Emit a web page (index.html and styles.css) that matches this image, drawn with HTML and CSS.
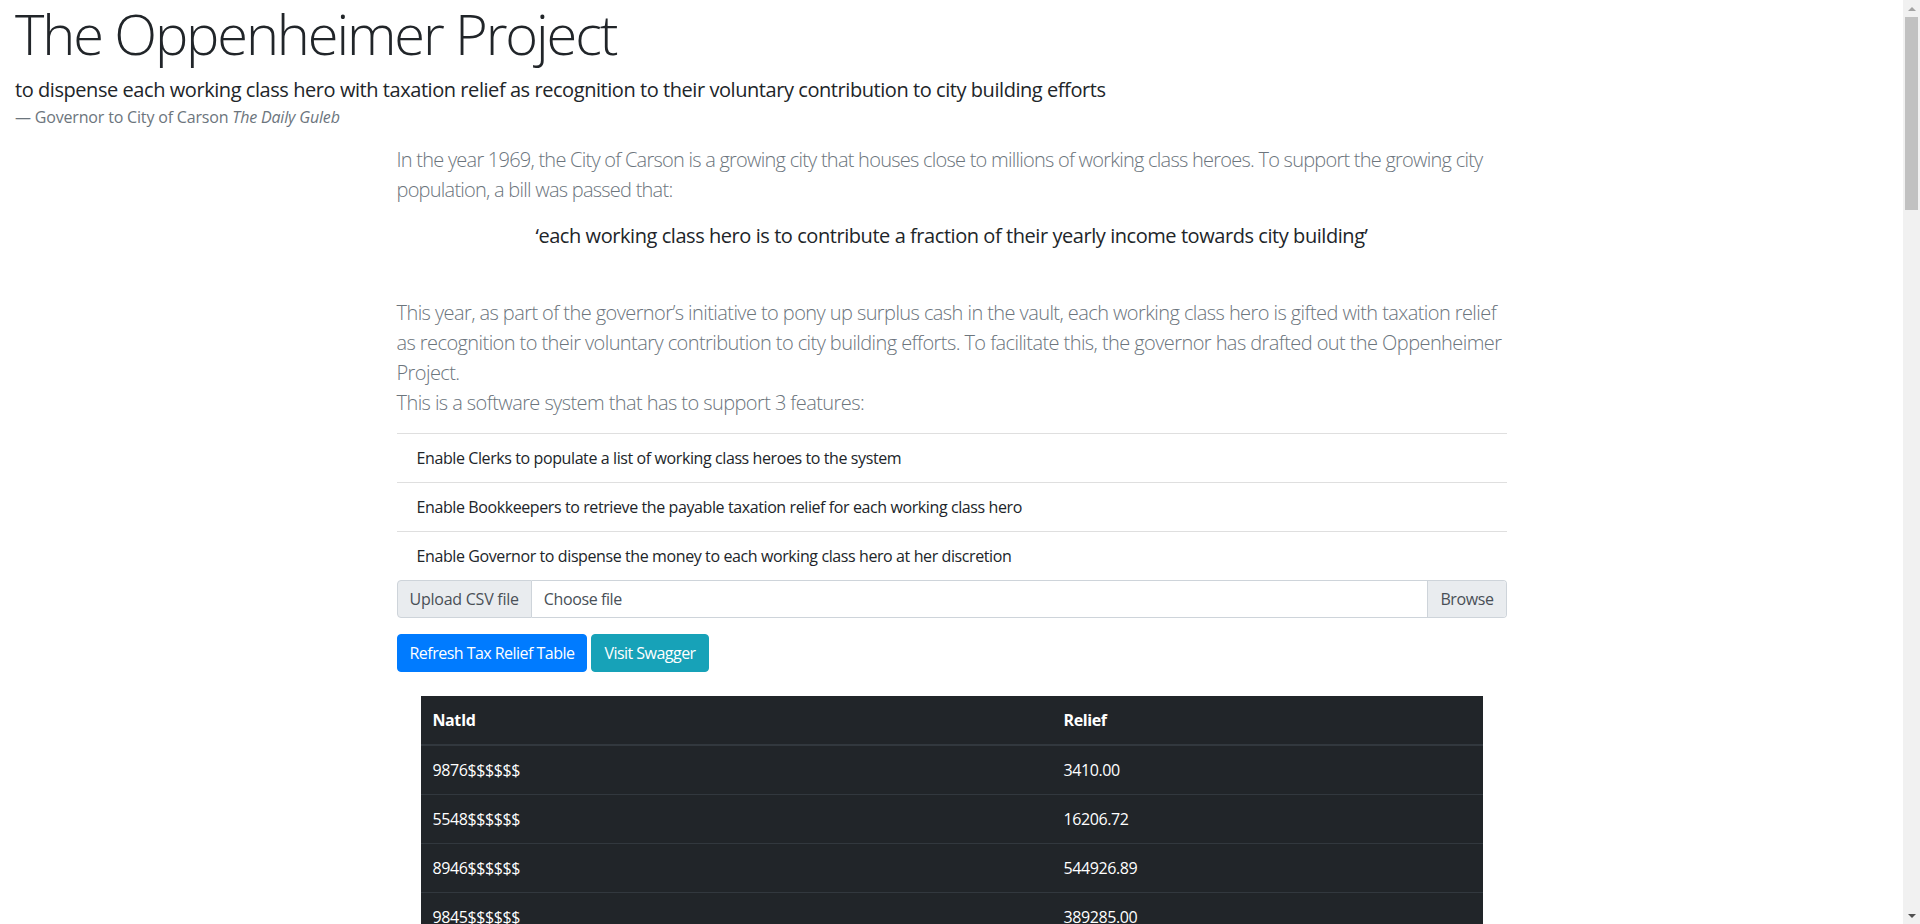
FILE: index.html
```html
<!DOCTYPE html>
<html lang="en">
<head>
<meta charset="utf-8">
<title>The Oppenheimer Project</title>
<link rel="stylesheet" href="styles.css">
</head>
<body>
<div class="viewport">
  <div class="page">
    <header class="intro">
      <h1 class="intro-title">The Oppenheimer Project</h1>
      <blockquote class="motto">
        <p class="motto-text">to dispense each working class hero with taxation relief as recognition to their voluntary contribution to city building efforts</p>
        <footer class="motto-source">— Governor to City of Carson <cite class="motto-cite">The Daily Guleb</cite></footer>
      </blockquote>
    </header>
    <main class="container">
      <p class="lead">In the year 1969, the City of Carson is a growing city that houses close to millions of working class heroes. To support the growing city population, a bill was passed that:</p>
      <p class="bill">‘each working class hero is to contribute a fraction of their yearly income towards city building’</p>
      <p class="lead lead-features">This year, as part of the governor’s initiative to pony up surplus cash in the vault, each working class hero is gifted with taxation relief as recognition to their voluntary contribution to city building efforts. To facilitate this, the governor has drafted out the Oppenheimer Project.<br>This is a software system that has to support 3 features:</p>
      <ul class="features">
        <li class="feature">Enable Clerks to populate a list of working class heroes to the system</li>
        <li class="feature">Enable Bookkeepers to retrieve the payable taxation relief for each working class hero</li>
        <li class="feature">Enable Governor to dispense the money to each working class hero at her discretion</li>
      </ul>
      <div class="upload">
        <span class="upload-prepend">Upload CSV file</span>
        <label class="upload-file">
          <input type="file" class="upload-input" accept=".csv">
          <span class="upload-label">Choose file</span>
          <span class="upload-browse">Browse</span>
        </label>
      </div>
      <div class="actions">
        <button class="btn btn-primary" type="button">Refresh Tax Relief Table</button>
        <button class="btn btn-info" type="button">Visit Swagger</button>
      </div>
      <table class="relief-table">
        <thead>
          <tr><th class="col-id">NatId</th><th>Relief</th></tr>
        </thead>
        <tbody>
          <tr><td>9876$$$$$$</td><td>3410.00</td></tr>
          <tr><td>5548$$$$$$</td><td>16206.72</td></tr>
          <tr><td>8946$$$$$$</td><td>544926.89</td></tr>
          <tr><td>9845$$$$$$</td><td>389285.00</td></tr>
        </tbody>
      </table>
    </main>
  </div>
  <div class="scrollbar" aria-hidden="true">
    <div class="scrollbar-btn"><span class="arrow-up"></span></div>
    <div class="scrollbar-track"><div class="scrollbar-thumb"></div></div>
    <div class="scrollbar-btn"><span class="arrow-down"></span></div>
  </div>
</div>
</body>
</html>
```

FILE: styles.css
```css
* { box-sizing: border-box; }
html, body { height: 100%; }
body {
  margin: 0;
  font-family: "Open Sans", "Segoe UI", sans-serif;
  font-size: 16px;
  line-height: 1.5;
  color: #212529;
  background: #fff;
  overflow: hidden;
  letter-spacing: -0.025em;
}
.viewport { display: flex; height: 100%; }
.page { flex: 1; min-width: 0; overflow: hidden; }

.intro { padding: 0 15px; }
.intro-title {
  margin: 0 0 8px;
  font-size: 56px;
  font-weight: 300;
  line-height: 1.2;
  letter-spacing: -0.038em;
}
.motto { margin: 0 0 16px; font-size: 20px; }
.motto-text { margin: 0; line-height: 30px; letter-spacing: -0.022em; }
.motto-source { display: block; font-size: 16px; line-height: 24px; color: #6c757d; letter-spacing: -0.011em; }
.motto-cite { font-style: italic; }

.container { max-width: 1140px; margin: 0 auto; padding: 0 15px; }
.lead {
  margin: 0 0 16px;
  font-size: 20px;
  font-weight: 300;
  line-height: 30px;
  color: #6c757d;
  letter-spacing: -0.038em;
}
.lead-features { margin-bottom: 15px; letter-spacing: -0.029em; }
.bill {
  margin: 0 0 47px;
  font-size: 20px;
  line-height: 30px;
  text-align: center;
  letter-spacing: -0.022em;
}

.features { list-style: none; margin: 0; padding: 0; }
.feature { padding: 12px 20px; border-top: 1px solid rgba(0,0,0,.125); }

.upload { display: flex; height: 38px; margin-bottom: 16px; color: #495057; }
.upload-prepend {
  padding: 6px 12px;
  background: #e9ecef;
  border: 1px solid #ced4da;
  border-radius: 4px 0 0 4px;
  letter-spacing: -0.015em;
}
.upload-file {
  flex: 1;
  display: flex;
  border: 1px solid #ced4da;
  border-left: 0;
  border-radius: 0 4px 4px 0;
  overflow: hidden;
  cursor: pointer;
}
.upload-input { display: none; }
.upload-label { flex: 1; padding: 6px 12px; }
.upload-browse { padding: 6px 12px; background: #e9ecef; border-left: 1px solid #ced4da; }

.actions { display: flex; gap: 4px; }
.btn {
  height: 38px;
  padding: 6px 12px;
  font: inherit;
  letter-spacing: -0.033em;
  line-height: 24px;
  color: #fff;
  border: 1px solid transparent;
  border-radius: 4px;
  cursor: pointer;
}
.btn-primary { background: #007bff; border-color: #007bff; }
.btn-info { background: #17a2b8; border-color: #17a2b8; }

.relief-table {
  width: calc(100% - 48px);
  margin: 24px 24px 0;
  border-collapse: collapse;
  background: #212529;
  color: #fff;
}
.relief-table th, .relief-table td {
  padding: 12px;
  text-align: left;
  vertical-align: top;
}
.relief-table th { font-weight: 700; border-bottom: 2px solid #32383e; }
.relief-table td { border-top: 1px solid #32383e; }
.col-id { width: 59.42%; }

.scrollbar {
  flex: none;
  width: 17px;
  background: #f1f1f1;
  display: flex;
  flex-direction: column;
}
.scrollbar-btn { height: 17px; display: flex; align-items: center; justify-content: center; }
.arrow-up { border-left: 4px solid transparent; border-right: 4px solid transparent; border-bottom: 4px solid #a3a3a3; }
.arrow-down { border-left: 4px solid transparent; border-right: 4px solid transparent; border-top: 4px solid #505050; }
.scrollbar-track { flex: 1; }
.scrollbar-thumb { height: 193px; margin: 0 2px; background: #c1c1c1; }
```
